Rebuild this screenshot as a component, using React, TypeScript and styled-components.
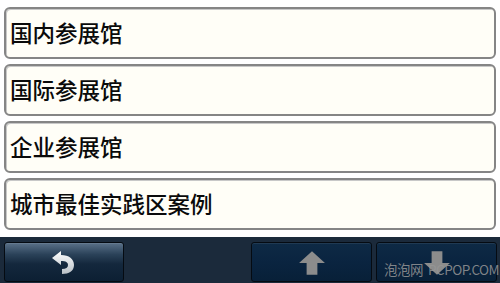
import styled, { createGlobalStyle } from "styled-components";

const GlobalStyle = createGlobalStyle`
  html, body {
    margin: 0;
    padding: 0;
    background: #ffffff;
  }
`;

const items = ["国内参展馆", "国际参展馆", "企业参展馆", "城市最佳实践区案例"];

function BackIcon() {
  return (
    <svg width="30" height="26" viewBox="0 0 30 26">
      <defs>
        <linearGradient id="backg" x1="0" y1="0" x2="0" y2="1">
          <stop offset="0" stopColor="#ffffff" />
          <stop offset="1" stopColor="#b9c0c6" />
        </linearGradient>
      </defs>
      <path
        d="M3 8 L12 1 L12 5 C20 5 25 9 25 15 C25 21 20 24 13 24 L13 19 C17 19 19 17.5 19 15 C19 12.5 17 11 12 11 L12 15 Z"
        fill="url(#backg)"
      />
    </svg>
  );
}

function ArrowIcon({ down }: { down?: boolean }) {
  return (
    <svg
      width="28"
      height="26"
      viewBox="0 0 26 24"
      style={down ? { transform: "rotate(180deg)" } : undefined}
    >
      <path d="M13 1 L25 12 L18 12 L18 23 L8 23 L8 12 L1 12 Z" fill="#8c8c8c" />
    </svg>
  );
}

export default function App() {
  return (
    <Screen>
      <GlobalStyle />
      <List>
        {items.map((label) => (
          <Item key={label}>{label}</Item>
        ))}
      </List>
      <Bar>
        <NavButton $light>
          <BackIcon />
        </NavButton>
        <span />
        <NavButton>
          <ArrowIcon />
        </NavButton>
        <NavButton>
          <ArrowIcon down />
          <Watermark>泡泡网&nbsp;&nbsp;PCPOP.COM</Watermark>
        </NavButton>
      </Bar>
    </Screen>
  );
}

const Screen = styled.div`
  width: 500px;
  height: 283px;
  display: flex;
  flex-direction: column;
  background: #ffffff;
  overflow: hidden;
`;

const List = styled.div`
  display: flex;
  flex-direction: column;
  gap: 5px;
  padding: 7px 4px 7px 4px;
`;

const Item = styled.div`
  height: 52px;
  box-sizing: border-box;
  border: 2px solid #858585;
  border-radius: 6px;
  background: #fffef7;
  display: flex;
  align-items: center;
  padding: 0 0 3px 4px;
  font-family: "Noto Sans CJK SC", "Liberation Sans", sans-serif;
  font-size: 22.5px;
  font-weight: 500;
  color: #0a0a0a;
  box-shadow: inset 1px 1px 0 #c8c8c8;
`;

const Bar = styled.div`
  flex: 1;
  background: #1b2a3b;
  display: grid;
  grid-template-columns: 120px 1fr 121px 121px;
  gap: 4px;
  padding: 5px 3px 1px 4px;
`;

const NavButton = styled.div<{ $light?: boolean }>`
  position: relative;
  box-sizing: border-box;
  border: 1px solid #050b12;
  border-radius: 3px;
  display: flex;
  align-items: center;
  justify-content: center;
  padding-top: 2px;
  background: ${({ $light }) =>
    $light
      ? "linear-gradient(to bottom, #5a7189 0%, #2b4259 30%, #14283d 55%, #0c1f33 100%)"
      : "linear-gradient(to bottom, #0e2a45 0%, #0a2440 50%, #082038 100%)"};
  box-shadow: inset 0 1px 0 rgba(255, 255, 255, 0.08);
`;

const Watermark = styled.span`
  position: absolute;
  left: 7px;
  bottom: 2px;
  font-family: "Noto Sans CJK SC", "Liberation Sans", sans-serif;
  font-size: 13.5px;
  color: rgba(150, 150, 150, 0.85);
  white-space: nowrap;
  letter-spacing: -0.5px;
`;
